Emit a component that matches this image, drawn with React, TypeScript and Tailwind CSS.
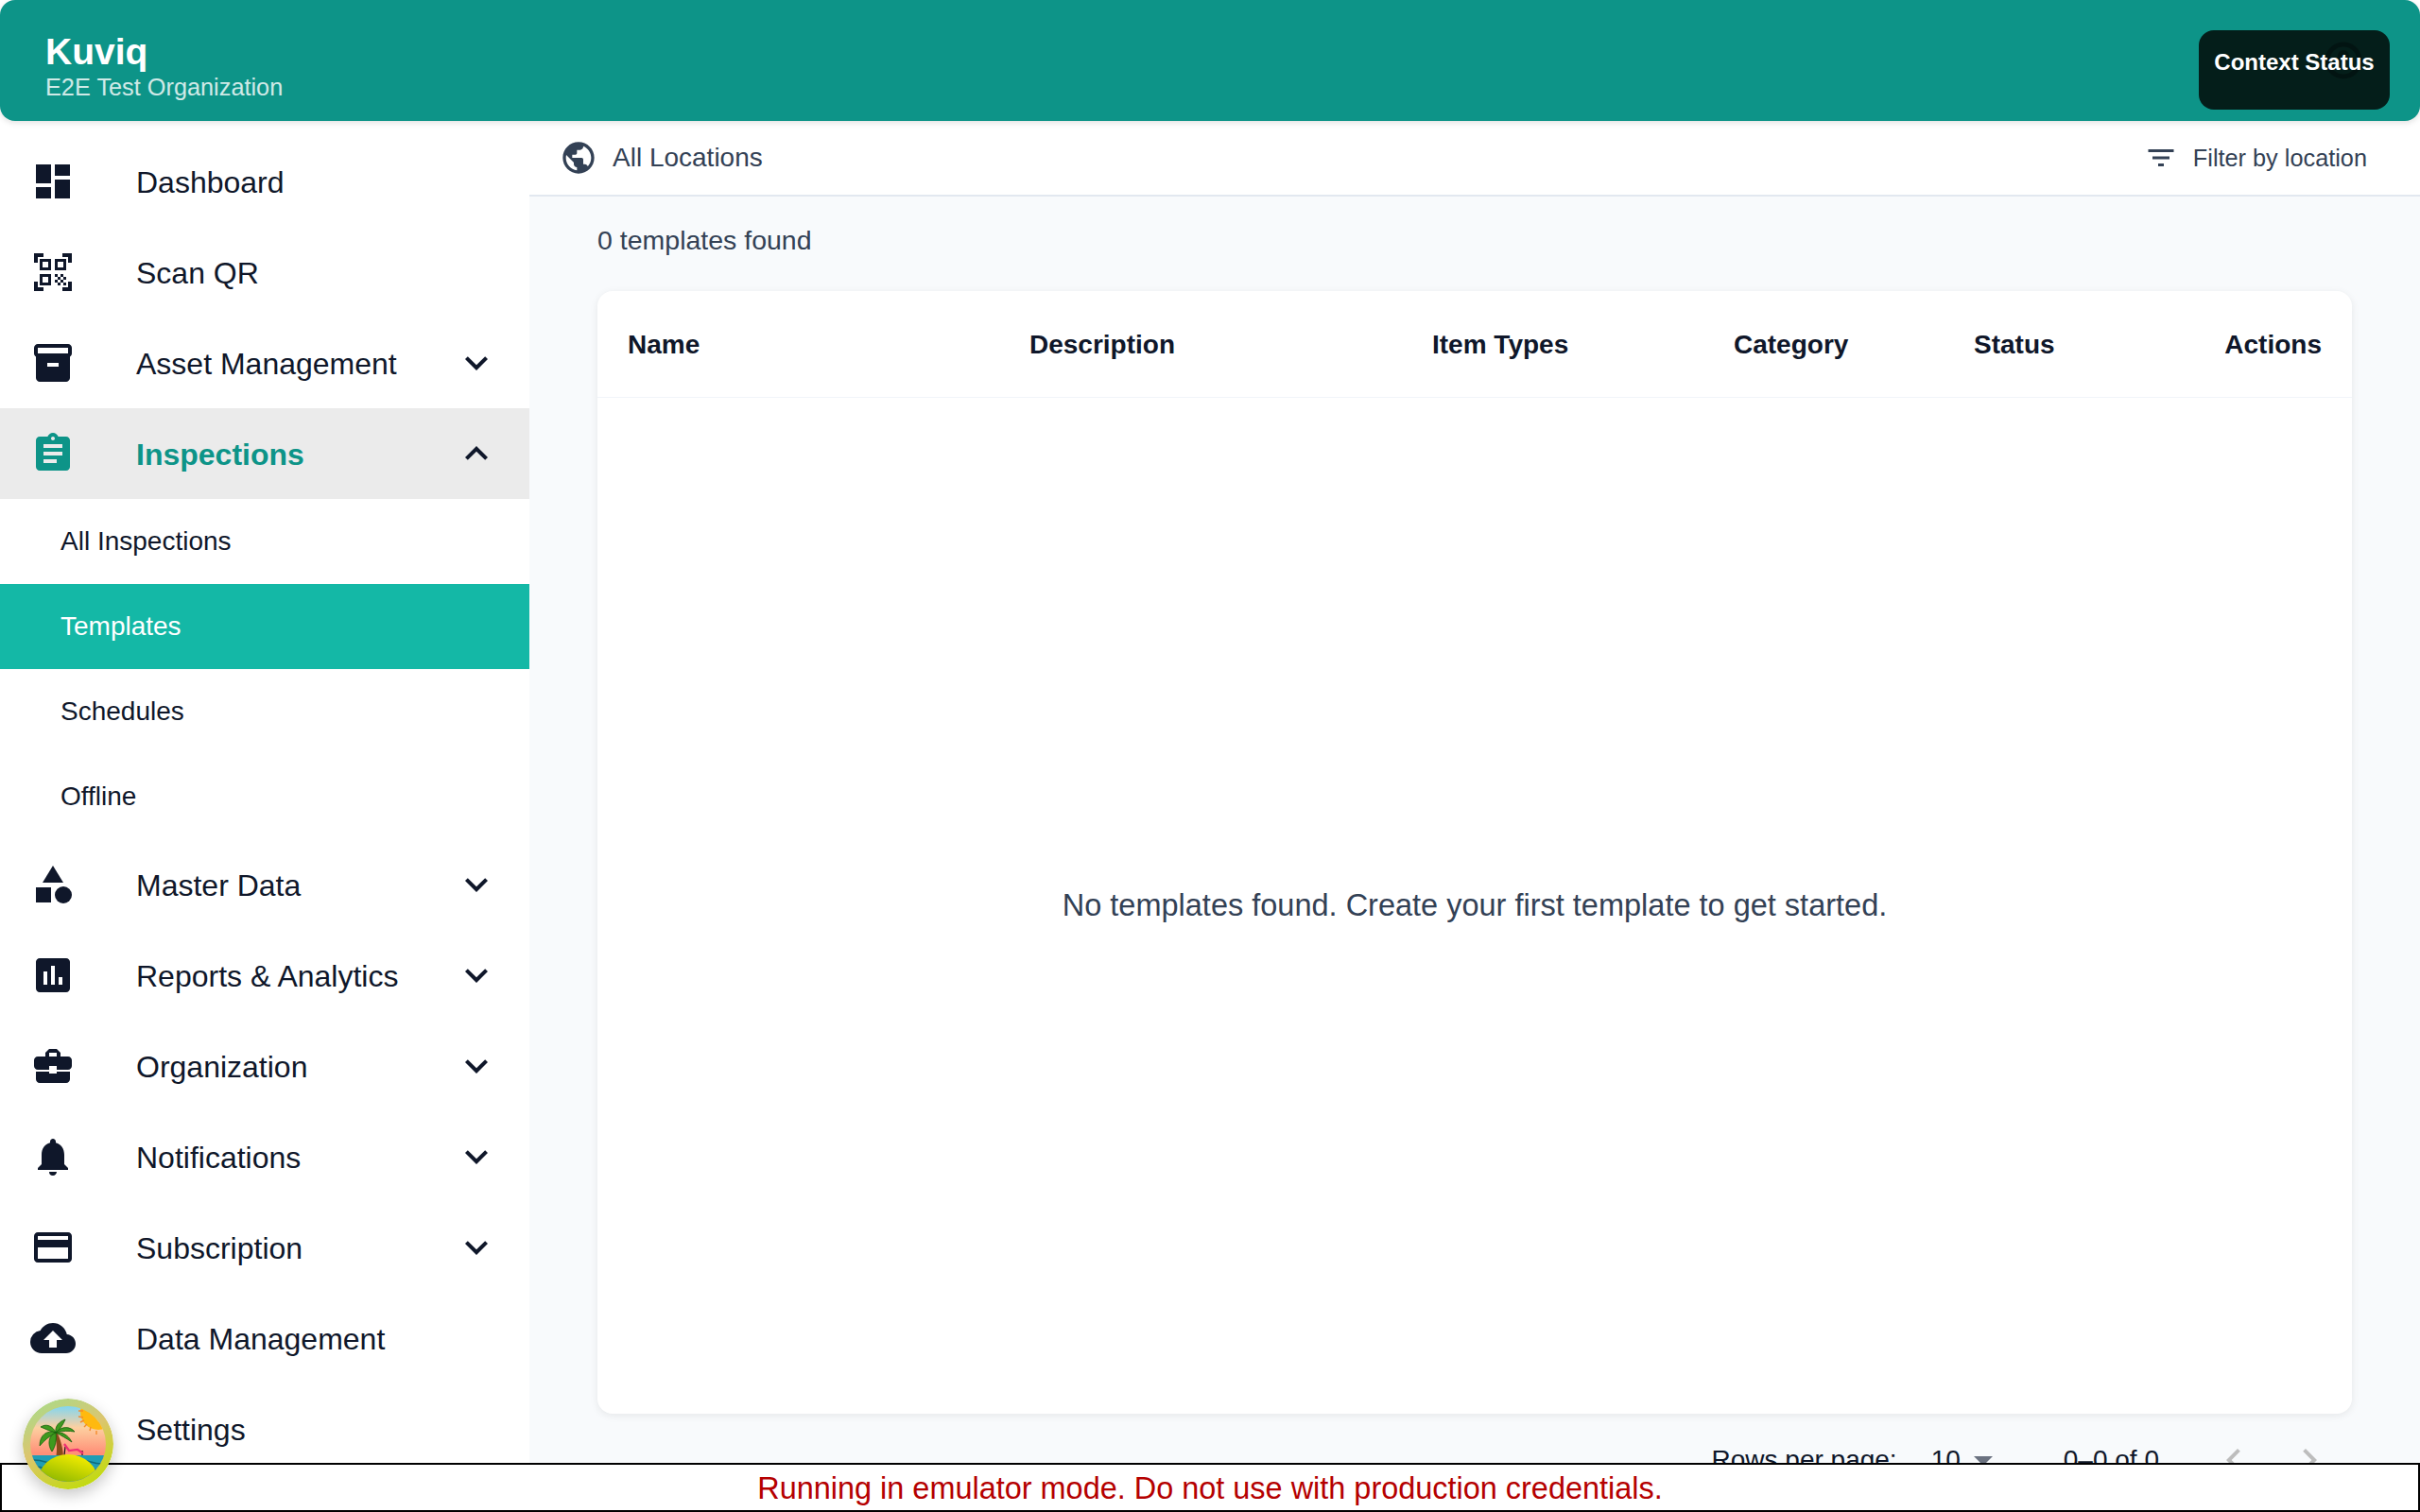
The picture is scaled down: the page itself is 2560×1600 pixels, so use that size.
import type { ReactNode } from "react"
import {
  MdDashboard,
  MdQrCodeScanner,
  MdInventory2,
  MdAssignment,
  MdCategory,
  MdAssessment,
  MdBusinessCenter,
  MdNotifications,
  MdCreditCard,
  MdCloudUpload,
  MdSettings,
  MdExpandMore,
  MdExpandLess,
  MdPublic,
  MdFilterList,
  MdChevronLeft,
  MdChevronRight,
  MdArrowDropDown,
} from "react-icons/md"

const inspectionLinks = ["All Inspections", "Templates", "Schedules", "Offline"]

const NavItem = ({ icon, label, open, active }: { icon: ReactNode; label: string; open?: boolean; active?: boolean }) => {
  return (
    <div className={`flex h-24 items-center pl-8 pr-8 ${active ? "bg-[#ebebeb] text-[#0d9488]" : "text-[#0f172a]"}`}>
      <div className="w-28 shrink-0 text-5xl">{icon}</div>
      <span className={`flex-1 pt-0.5 text-[32px] ${active ? "font-bold" : ""}`}>{label}</span>
      {open === true && <MdExpandLess className="text-5xl text-[#0f172a]" />}
      {open === false && <MdExpandMore className="text-5xl text-[#0f172a]" />}
    </div>
  )
}

const Avatar = () => (
  <svg viewBox="0 0 96 96" className="h-24 w-24 rounded-full shadow-[0_6px_16px_rgba(0,0,0,0.22)]">
    <defs>
      <linearGradient id="ring" x1="0.1" y1="0" x2="0.6" y2="1">
        <stop offset="0" stopColor="#a6dc8c" />
        <stop offset="0.5" stopColor="#dcc56e" />
        <stop offset="1" stopColor="#c3da12" />
      </linearGradient>
      <linearGradient id="sky" x1="0" y1="0" x2="0" y2="1">
        <stop offset="0.08" stopColor="#7fd6f2" />
        <stop offset="0.32" stopColor="#fdd0a0" />
        <stop offset="0.6" stopColor="#ff9078" />
      </linearGradient>
      <linearGradient id="hill" x1="0.65" y1="0" x2="0.3" y2="1">
        <stop offset="0" stopColor="#f4ec00" />
        <stop offset="1" stopColor="#3f8f00" />
      </linearGradient>
      <clipPath id="inner">
        <circle cx="48" cy="48" r="40" />
      </clipPath>
    </defs>
    <circle cx="48" cy="48" r="48" fill="url(#ring)" />
    <g clipPath="url(#inner)">
      <rect width="96" height="96" fill="url(#sky)" />
      <circle cx="80" cy="14" r="19" fill="#ffb90f" />
      <g stroke="#f58a2a" strokeWidth="1.4">
        <path d="M59 13h5M59 19l5 1M61 25l4-2M65 30l3-3M71 34l1-4M78 38v-4" />
      </g>
      <path d="M33 36c3 8 4 18 2 27h8c0-10-3-20-7-28z" fill="#8a4a1a" />
      <g fill="#3f9a1e" stroke="#14600c" strokeWidth="0.8">
        <path d="M35 36c-3-7-10-10-16-6 5 2 11 5 16 6z" />
        <path d="M35 36c-9-3-17 2-17 14 5-6 10-10 17-14z" />
        <path d="M35 36c-8 3-9 13-4 20 4-6 5-13 4-20z" />
        <path d="M35 36c6-7 15-7 20-1-6-1-13-1-20 1z" />
        <path d="M35 36c-1-7 3-11 10-14-2 5-5 10-10 14z" />
        <path d="M35 36c6-1 13 2 17 10-6-4-11-7-17-10z" />
      </g>
      <path d="M44 60l1-9M63 60v-5" stroke="#111" strokeWidth="1.2" />
      <path d="M44 48l5 7 9-1 6 4" fill="none" stroke="#ef2f74" strokeWidth="2.2" />
      <rect y="60" width="96" height="36" fill="#1f9db5" />
      <path d="M0 67q12-4 24 0t24 0 24 0 24 0M0 74q12-4 24 0t24 0 24 0 24 0" fill="none" stroke="#0e6c7c" strokeWidth="1.6" />
      <ellipse cx="48" cy="88" rx="32" ry="29" fill="url(#hill)" />
    </g>
  </svg>
)

const App = () => {
  return (
    <div className="relative flex h-screen flex-col overflow-hidden bg-white font-['Liberation_Sans',Arial,sans-serif]">
      <header className="relative z-10 flex h-32 shrink-0 items-center justify-between rounded-2xl bg-[#0d9488] pl-12 pr-8 shadow-[0_2px_6px_rgba(0,0,0,0.12)]">
        <div className="pt-[10px] text-white">
          <div className="text-[39px] font-bold leading-[45px]">Kuviq</div>
          <div className="text-[25.3px] leading-[30px] text-white/80">E2E Test Organization</div>
        </div>
        <div className="relative mt-5 h-[84px] w-[202px] rounded-2xl bg-[#041e1a] pt-[17px] text-center text-2xl font-bold leading-[34px] text-white">
          <svg viewBox="0 0 40 40" className="absolute left-[133px] top-3 h-10 w-10 text-black/30">
            <circle cx="20" cy="20" r="17" fill="none" stroke="currentColor" strokeWidth="5" />
            <circle cx="20" cy="15" r="6" fill="currentColor" />
          </svg>
          <span className="relative">Context Status</span>
        </div>
      </header>

      <div className="flex min-h-0 flex-1">
        <nav className="w-[560px] shrink-0 pt-4">
          <NavItem icon={<MdDashboard />} label="Dashboard" />
          <NavItem icon={<MdQrCodeScanner />} label="Scan QR" />
          <NavItem icon={<MdInventory2 />} label="Asset Management" open={false} />
          <NavItem icon={<MdAssignment />} label="Inspections" open active />
          {inspectionLinks.map((link) => (
            <div
              key={link}
              className={`flex h-[90px] items-center pl-16 text-[28px] ${link === "Templates" ? "bg-[#14b8a6] text-white" : "text-[#0f172a]"}`}
            >
              {link}
            </div>
          ))}
          <NavItem icon={<MdCategory />} label="Master Data" open={false} />
          <NavItem icon={<MdAssessment />} label="Reports & Analytics" open={false} />
          <NavItem icon={<MdBusinessCenter />} label="Organization" open={false} />
          <NavItem icon={<MdNotifications />} label="Notifications" open={false} />
          <NavItem icon={<MdCreditCard />} label="Subscription" open={false} />
          <NavItem icon={<MdCloudUpload />} label="Data Management" />
          <NavItem icon={<MdSettings />} label="Settings" />
        </nav>

        <main className="min-w-0 flex-1 bg-[#f8fafc]">
          <div className="flex h-20 items-center justify-between border-b-2 border-[#e2e8f0] bg-white pl-8 pr-14 text-[#334155]">
            <div className="flex items-center gap-4">
              <MdPublic className="text-[40px]" />
              <span className="text-[28px]">All Locations</span>
            </div>
            <div className="flex items-center gap-4">
              <MdFilterList className="text-4xl" />
              <span className="pt-[2px] text-[25.3px]">Filter by location</span>
            </div>
          </div>

          <div className="px-[72px]">
            <p className="pt-[29px] text-[28.5px] leading-[34px] text-[#334155]">0 templates found</p>
            <div className="mt-[37px] flex h-[1188px] flex-col rounded-2xl bg-white shadow-[0_2px_8px_rgba(0,0,0,0.08)]">
              <div className="grid h-[113px] grid-cols-[425px_426px_319px_254px_1fr_auto] items-center border-b border-[#f1f5f9] px-8 pt-[2px] text-[28px] font-bold text-[#0f172a]">
                <span>Name</span>
                <span>Description</span>
                <span>Item Types</span>
                <span>Category</span>
                <span>Status</span>
                <span>Actions</span>
              </div>
              <div className="flex flex-1 items-center justify-center text-[32.5px] text-[#334155]">
                No templates found. Create your first template to get started.
              </div>
            </div>
            <div className="mt-[33px] flex h-8 items-center justify-end pr-[21px] text-[28px] text-[#0f172a]">
              <span>Rows per page:</span>
              <span className="ml-9">10</span>
              <MdArrowDropDown className="text-5xl text-[#6b7280]" />
              <span className="ml-[61px]">0–0 of 0</span>
              <MdChevronLeft className="ml-[55px] text-5xl text-[#bdbdbd]" />
              <MdChevronRight className="ml-8 text-5xl text-[#bdbdbd]" />
            </div>
          </div>
        </main>
      </div>

      <div className="absolute bottom-[24px] left-6 z-30">
        <Avatar />
      </div>

      <div className="fixed bottom-0 left-0 z-20 flex h-[52px] w-full items-center justify-center border-2 border-black bg-white pt-[2px] text-[32.45px] text-[#b50000]">
        Running in emulator mode. Do not use with production credentials.
      </div>
    </div>
  )
}

export default App
